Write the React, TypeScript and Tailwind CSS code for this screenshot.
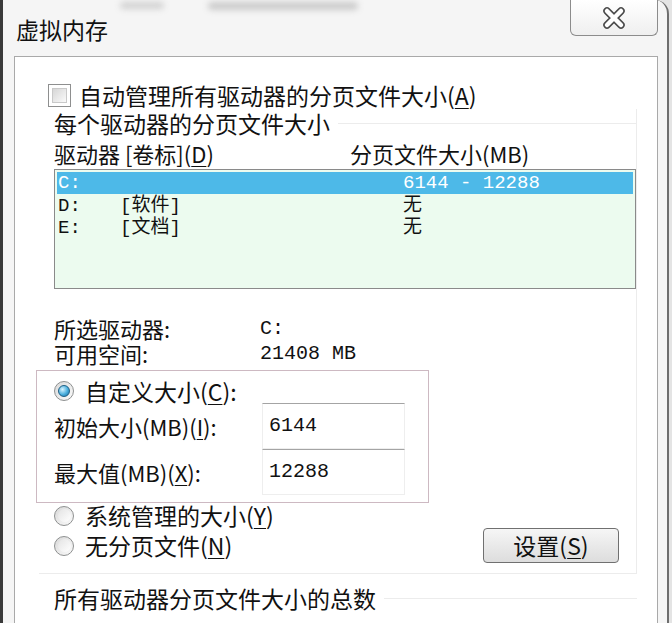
import React from 'react';

const cjk = "font-['Noto_Sans_CJK_SC','Noto_Sans',sans-serif]";
const mono = "font-['Liberation_Mono','Noto_Sans_CJK_SC',monospace]";

function Key({ k }: { k: string }) {
  return (
    <>
      (<span className="underline underline-offset-[3px] decoration-1">{k}</span>)
    </>
  );
}

function Radio({ checked = false }: { checked?: boolean }) {
  return (
    <span className="flex h-[20px] w-[20px] flex-none items-center justify-center rounded-full border border-[#8e9090] bg-gradient-to-br from-[#d9d9d9] to-[#fbfbfb]">
      {checked ? (
        <span className="h-[12px] w-[12px] rounded-full border border-[#1d5f85] bg-[radial-gradient(circle_at_35%_35%,#d6f3ff,#49aedd_55%,#1a6b9c)]" />
      ) : (
        <span className="h-[13px] w-[13px] rounded-full bg-gradient-to-br from-[#e4e4e4] to-white" />
      )}
    </span>
  );
}

function Checkbox() {
  return (
    <span className="flex h-[23px] w-[23px] flex-none items-center justify-center border border-[#8e8f8f] bg-white">
      <span className="h-[15px] w-[15px] border border-[#c9c9c9] bg-gradient-to-br from-[#d6d6d6] to-[#fafafa]" />
    </span>
  );
}

function CloseGlyph() {
  return (
    <svg width="24" height="22" viewBox="0 0 24 22" aria-hidden="true">
      <path d="M5 4 L19 18 M19 4 L5 18" stroke="#4a4a4a" strokeWidth="7.5" strokeLinecap="round" fill="none" />
      <path d="M5 4 L19 18 M19 4 L5 18" stroke="#ffffff" strokeWidth="4.5" strokeLinecap="round" fill="none" />
    </svg>
  );
}

export default function App() {
  return (
    <div className={`flex h-[623px] w-[672px] overflow-hidden bg-[#e4e4e4] text-[#111] ${cjk}`}>
      <div className="flex h-[623px] w-[669px] flex-none flex-col rounded-tr-[14px] border-l-[3px] border-r-[2px] border-l-[#3a3a3a] border-r-[#6e6e6e] bg-[#f5f5f5]">
        {/* title bar */}
        <div className="flex h-[56px] flex-none">
          <div className="flex flex-col">
            <div className="flex h-[15px] items-start pt-[2px]">
              <span className="ml-[117px] h-[7px] w-[44px] rounded-full bg-[#9a9a9a] opacity-40 blur-[3px]" />
              <span className="ml-[44px] h-[8px] w-[150px] rounded-full bg-[#8a8a8a] opacity-40 blur-[3px]" />
            </div>
            <div className="pl-[13px] text-[23px] leading-[28px]">虚拟内存</div>
          </div>
          <div className="ml-auto mr-[9px] flex h-[36px] w-[88px] items-center justify-center rounded-b-[6px] border border-t-0 border-[#8c8c8c] bg-gradient-to-b from-white to-[#efefef]">
            <CloseGlyph />
          </div>
        </div>

        {/* client panel */}
        <div className="ml-[11px] flex w-[644px] flex-1 flex-col border border-b-0 border-[#a9a9a9] bg-white">
          <div className="mt-[24px] flex h-[28px] items-center gap-[8px] pl-[33px] text-[23px] leading-[28px]">
            <Checkbox />
            <span>
              自动管理所有驱动器的分页文件大小<Key k="A" />
            </span>
          </div>

          {/* group: per-drive */}
          <div className="ml-[24px] w-[598px] border-b border-r border-[#ececec]">
            <div className="flex h-[28px] items-center gap-[8px] pl-[15px] text-[23px] leading-[28px]">
              <span>每个驱动器的分页文件大小</span>
              <span className="h-0 flex-1 border-t border-[#ececec]" />
            </div>
            <div className="pl-[15px]">
              <div className="mt-[2px] flex h-[28px] items-center text-[22px] leading-[28px]">
                <span className="w-[296px]">
                  驱动器 [卷标]<Key k="D" />
                </span>
                <span>分页文件大小(MB)</span>
              </div>

              <div className={`mt-[2px] h-[120px] border border-[#8a8a8a] bg-[#ecfbef] p-[2px] text-[19px] leading-[22px] ${mono}`}>
                <div className="flex h-[22px] items-center bg-[#4db9e8] pl-[1px] text-white">
                  <span className="w-[62px]">C:</span>
                  <span className="w-[283px]" />
                  <span>6144 - 12288</span>
                </div>
                <div className="flex h-[23px] items-end pl-[1px]">
                  <span className="w-[62px]">D:</span>
                  <span className="w-[283px]">[软件]</span>
                  <span>无</span>
                </div>
                <div className="flex h-[22px] items-end pl-[1px]">
                  <span className="w-[62px]">E:</span>
                  <span className="w-[283px]">[文档]</span>
                  <span>无</span>
                </div>
              </div>

              <div className="mt-[27px] flex h-[25px] items-center text-[22px] leading-[25px]">
                <span className="w-[206px]">所选驱动器:</span>
                <span className={`text-[20px] ${mono}`}>C:</span>
              </div>
              <div className="flex h-[25px] items-center text-[22px] leading-[25px]">
                <span className="w-[206px]">可用空间:</span>
                <span className={`text-[20px] ${mono}`}>21408 MB</span>
              </div>

              {/* highlighted custom size block */}
              <div className="-ml-[18px] mt-[4px] w-[393px] border border-[#cdb9c2] pb-[7px] pl-[17px]">
                <div className="mt-[8px] flex h-[24px] items-center gap-[11px] text-[23px] leading-[24px]">
                  <Radio checked />
                  <span>
                    自定义大小<Key k="C" />:
                  </span>
                </div>
                <div className="flex h-[46px] items-center text-[22px]">
                  <span className="w-[208px]">
                    初始大小(MB)<Key k="I" />:
                  </span>
                  <span className={`flex h-[46px] w-[143px] items-center border border-[#eeeeee] border-t-[#a4a4a4] pl-[6px] text-[20px] ${mono}`}>
                    6144
                  </span>
                </div>
                <div className="flex h-[46px] items-center text-[22px]">
                  <span className="w-[208px]">
                    最大值(MB)<Key k="X" />:
                  </span>
                  <span className={`flex h-[46px] w-[143px] items-center border border-[#eeeeee] border-t-[#a4a4a4] pl-[6px] text-[20px] ${mono}`}>
                    12288
                  </span>
                </div>
              </div>

              <div className="flex h-[25px] items-center gap-[11px] text-[23px] leading-[25px]">
                <Radio />
                <span>
                  系统管理的大小<Key k="Y" />
                </span>
              </div>
              <div className="flex h-[35px] items-center pr-[17px] text-[23px]">
                <div className="flex items-center gap-[11px]">
                  <Radio />
                  <span>
                    无分页文件<Key k="N" />
                  </span>
                </div>
                <button
                  type="button"
                  className="ml-auto flex h-[35px] w-[136px] items-center justify-center rounded-[4px] border border-[#707070] bg-gradient-to-b from-[#f6f6f6] to-[#dddddd] text-[23px] leading-none"
                >
                  设置<Key k="S" />
                </button>
              </div>
              <div className="h-[10px]" />
            </div>
          </div>

          {/* group: totals */}
          <div className="ml-[24px] mt-[10px] w-[598px]">
            <div className="flex h-[28px] items-center gap-[8px] pl-[15px] text-[23px] leading-[28px]">
              <span>所有驱动器分页文件大小的总数</span>
              <span className="h-0 flex-1 border-t border-[#ececec]" />
            </div>
          </div>
        </div>
      </div>
    </div>
  );
}
